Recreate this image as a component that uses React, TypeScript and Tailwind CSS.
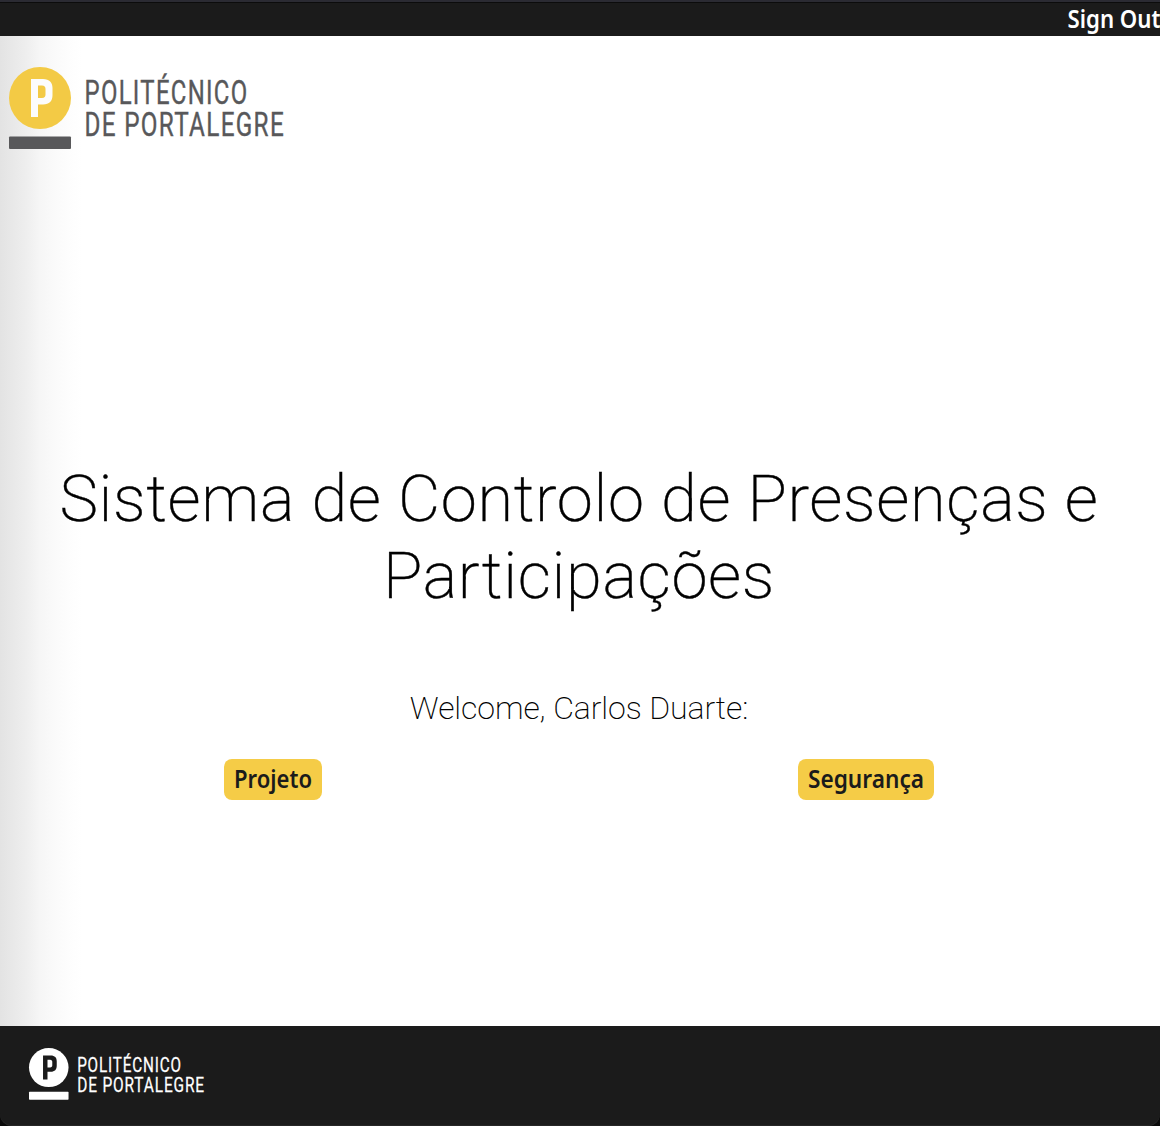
type LogoProps = {
  className: string;
  disc: string;
  letter: string;
  bar: string;
  ink: string;
};

function Logo({ className, disc, letter, bar, ink }: LogoProps) {
  return (
    <svg viewBox="0 0 276 84" preserveAspectRatio="none" className={`overflow-visible ${className}`} role="img" aria-label="Politécnico de Portalegre">
      <circle cx="31" cy="31" r="31" fill={disc} />
      <path
        d="M22 12H34c6.500 0 9.500 3.500 9.500 9V28c0 6-3 9.500-9.500 9.500h-5V50h-7zM29 18.500v12.500h4c2.500 0 3.500-1.500 3.500-3.500v-5.500c0-2-1-3.500-3.500-3.500z"
        fill={letter}
        fillRule="evenodd"
      />
      <rect x="0" y="69.500" width="62" height="12.500" rx="1" fill={bar} />
      <g fill={ink} stroke={ink} strokeWidth="0.400" className="font-['Roboto'] font-normal" fontSize="33" letterSpacing="1.800">
        <text x="75.500" y="37.300" textLength="164" lengthAdjust="spacingAndGlyphs">POLITÉCNICO</text>
        <text x="75.500" y="69.300" textLength="200.500" lengthAdjust="spacingAndGlyphs">DE PORTALEGRE</text>
      </g>
    </svg>
  );
}

function CourseButton({ label, textWidth, className }: { label: string; textWidth: number; className: string }) {
  return (
    <button className={`flex h-[41px] rounded-lg bg-[#f5cc47] text-[#1b1b1b] ${className}`}>
      <svg className="h-[41px] w-full overflow-visible">
        <text
          x="10"
          y="29"
          fontSize="25"
          fill="currentColor"
          className="font-['Noto_Sans'] font-semibold"
          textLength={textWidth}
          lengthAdjust="spacingAndGlyphs"
        >
          {label}
        </text>
      </svg>
    </button>
  );
}

export default function App() {
  return (
    <div className="flex h-[1126px] w-[1160px] flex-col overflow-hidden bg-white font-['Roboto',sans-serif] text-black">
      <header className="flex h-9 shrink-0 justify-end border-t-2 border-[#2b2b33] bg-[#1b1b1b] shadow-[inset_0_1px_0_#0c0c0c]">
        <a href="#" className="block h-[34px] w-[93px] text-white">
          <svg className="h-[34px] w-[93px] overflow-visible">
            <text x="0.500" y="26" fontSize="25" fill="currentColor" className="font-['Noto_Sans'] font-semibold" textLength="93" lengthAdjust="spacingAndGlyphs">
              Sign Out
            </text>
          </svg>
        </a>
      </header>
      <main className="flex grow flex-col bg-[linear-gradient(to_right,#e3e3e3_0px,#eeeeee_26px,#f6f6f6_40px,#fafafa_54px,#fdfdfd_68px,#ffffff_82px)]">
        <Logo className="ml-[9px] mt-[31px] h-[84px] w-[276px]" disc="#f3ca45" letter="#fcfcfc" bar="#58585a" ink="#58585a" />
        <h1 className="mr-[2px] mt-[310px] text-center text-[65px] font-extralight leading-[77px] tracking-[0.64px] [-webkit-text-stroke:0.4px_black]">
          Sistema de Controlo de Presenças e<br />
          Participações
        </h1>
        <p className="mr-[2px] mt-[73px] text-center text-[32px] font-extralight leading-10 tracking-[-0.1px]">Welcome, Carlos Duarte:</p>
        <div className="mt-[31px] flex pl-[224px]">
          <CourseButton label="Projeto" textWidth={78} className="w-[98px]" />
          <CourseButton label="Segurança" textWidth={116} className="ml-[476px] w-[136px]" />
        </div>
      </main>
      <div className="h-[100px] shrink-0 bg-[linear-gradient(#1b1b1b_50%,#0a0a0a_50%)]">
        <footer className="flex h-[100px] items-start rounded-b-[12px] bg-[#1b1b1b] pl-[28.500px] pt-[22px] shadow-[inset_0_-1px_0_#262626]">
          <Logo className="h-[53px] w-[176px]" disc="#ffffff" letter="#1b1b1b" bar="#ffffff" ink="#ffffff" />
        </footer>
      </div>
    </div>
  );
}
